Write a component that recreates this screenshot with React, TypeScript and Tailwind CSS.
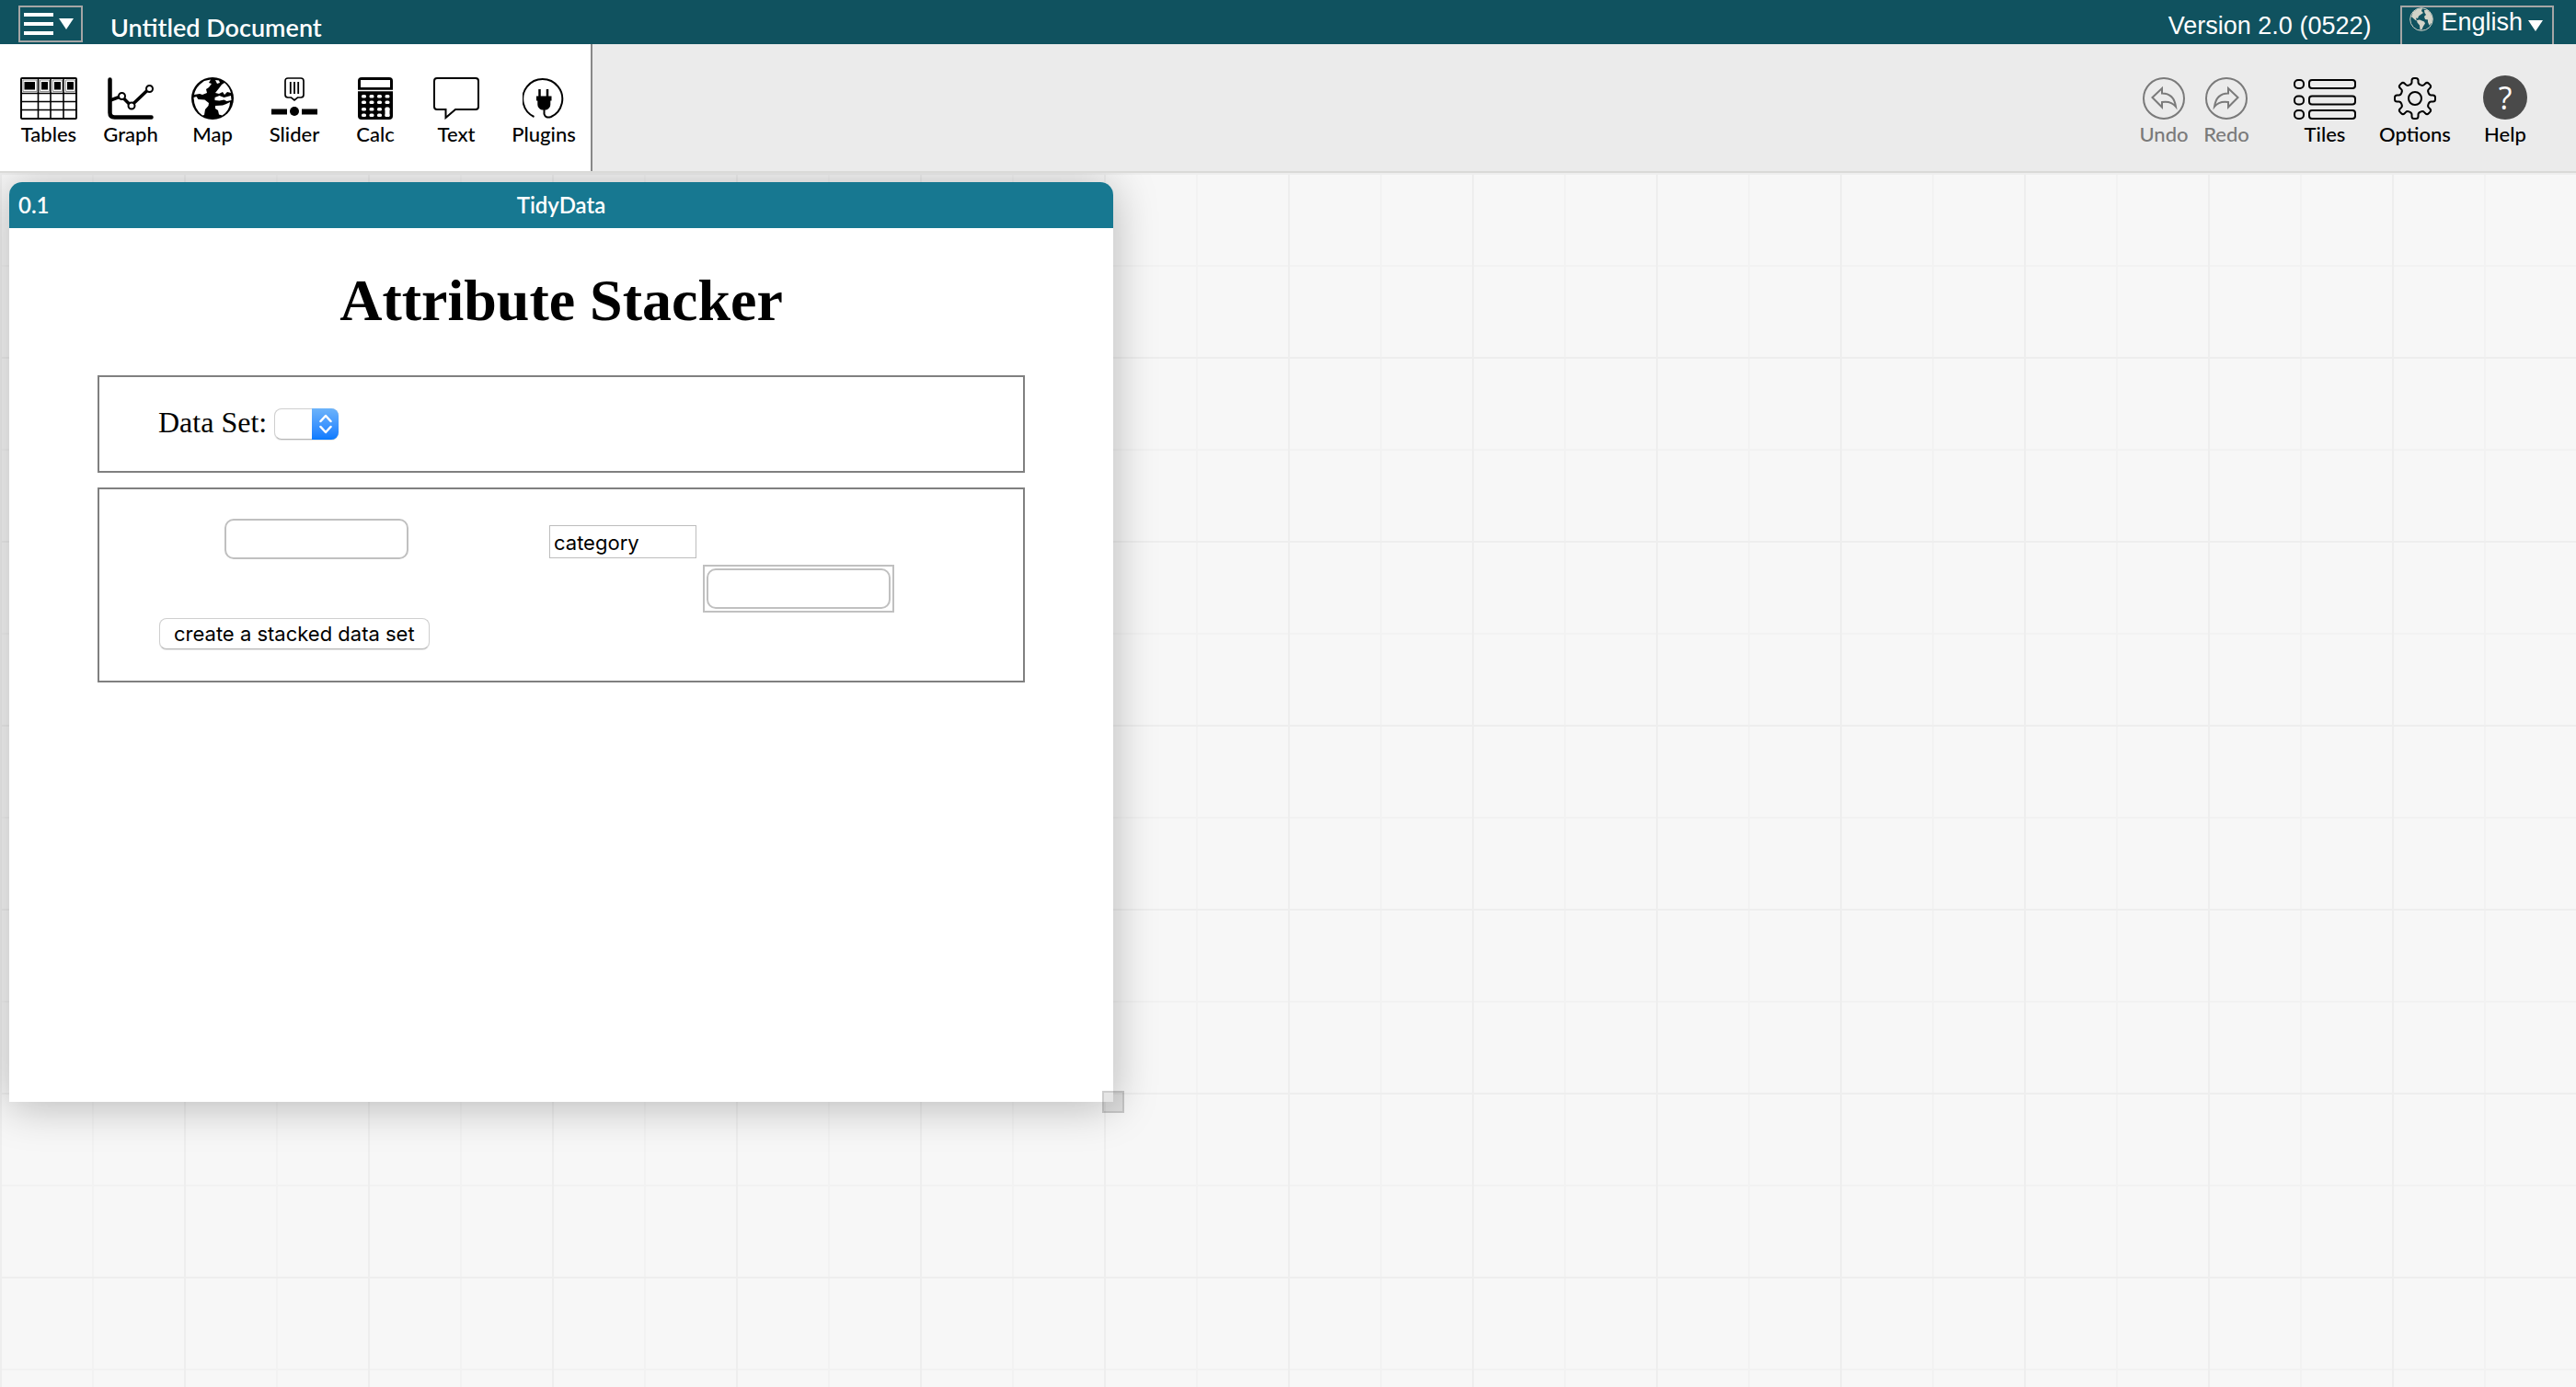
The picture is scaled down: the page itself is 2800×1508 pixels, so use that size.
import React from "react";

type IconProps = { className?: string };

const TablesIcon = () => (
  <svg width="62" height="46" viewBox="0 0 62 46">
    <rect x="1" y="1" width="60" height="44" rx="1" fill="#fff" stroke="#000" strokeWidth="2" />
    <path d="M1 17.500h60M1 26.500h60M1 35.500h60M19.500 1v44M33 1v44M47 1v44" stroke="#000" strokeWidth="1.600" fill="none" />
    <path d="M4.500 5h11.500v8.500h-11.500zM23 5h7v8.500h-7zM37 5h7v8.500h-7zM51 5h7v8.500h-7z" fill="#000" />
    <path d="M3 3h15v12.500h-15zM21.500 3h10v12.500h-10zM35.500 3h10v12.500h-10zM49.500 3h10v12.500h-10z" fill="none" stroke="#777" strokeWidth="0.800" />
  </svg>
);

const GraphIcon = () => (
  <svg width="50" height="46" viewBox="0 0 50 46" fill="none" stroke="#000">
    <path d="M2.500 2.500v36q0 5 5 5H47.500" strokeWidth="4.500" strokeLinecap="round" />
    <path d="M3 25l12-4.500L25.500 31 45 12.500" strokeWidth="3.500" />
    <circle cx="15.500" cy="20.500" r="3.500" fill="#fff" strokeWidth="2" />
    <circle cx="26" cy="31" r="3.500" fill="#fff" strokeWidth="2" />
    <circle cx="45.500" cy="12.500" r="3.500" fill="#fff" strokeWidth="2" />
  </svg>
);

const MapIcon = () => (
  <svg width="46" height="46" viewBox="0 0 46 46">
    <circle cx="23" cy="23" r="23" fill="#000" />
    <g fill="#fff">
      <path d="M9 8l5-4 7-1.500-2 3.500 3 1-3 4-3 2 1 4-5 2-3-1-6 1q1-6 6-11z" />
      <path d="M2.500 22l3-1 2 3 7 .5 4.500 3.500-.5 3-3.500 4-1 6-2 .5Q3 35 2.500 22z" />
      <path d="M26 3l4 .5 1 2.500-3 1zM30 12l3-4 3-2q5 4 7 11l-4-1-3 3-2-3-4 2-4-1z" />
      <path d="M25.500 22l5-2 5 2 7.500-2 .5 5-5 1-3-1.500-5 1-5-.5z" />
      <path d="M26 31l8-.5 4-1.500 4-2q0 9-8.500 14.500l-3.500-1-1-4.500-3-2z" />
    </g>
  </svg>
);

const SliderIcon = () => (
  <svg width="50" height="46" viewBox="0 0 50 46">
    <path d="M18 1h14q3 0 3 3v15q0 3-3 3h-3.500L25 25l-3.500-3H18q-3 0-3-3V4q0-3 3-3z" fill="#fff" stroke="#000" strokeWidth="1.700" />
    <path d="M20.800 5v13M25 5v13M29.200 5v13" stroke="#000" strokeWidth="1.800" />
    <path d="M0 34.500h17v6H0zM33 34.500h17v6H33z" />
    <circle cx="25" cy="37" r="5" />
  </svg>
);

const CalcIcon = () => (
  <svg width="38" height="46" viewBox="0 0 38 46">
    <rect width="38" height="46" rx="4" />
    <rect x="3" y="3" width="32" height="8" fill="#fff" />
    <path d="M0 14.500h38" stroke="#fff" strokeWidth="1.500" />
    {[20.5, 27, 34.5, 41].map((y) =>
      [6.5, 15, 23.5, 32].map((x) => (
        <rect key={`${x}-${y}`} x={x - 2.5} y={y - 1.5} width="5" height="3.500" rx="1.500" fill="#fff" />
      )),
    )}
    <rect x="29.500" y="32.500" width="5" height="10.500" rx="1.500" fill="#fff" />
  </svg>
);

const TextIcon = () => (
  <svg width="50" height="46" viewBox="0 0 50 46">
    <path d="M4 1h42q3 0 3 3v28q0 3-3 3H24L13.500 44V35H4q-3 0-3-3V4q0-3 3-3z" fill="#fff" stroke="#000" strokeWidth="2" />
  </svg>
);

const PluginsIcon = () => (
  <svg width="46" height="46" viewBox="0 0 46 46">
    <path d="M12.500 43A21.500 21.500 0 1 1 31 43q-6 2-7.500-3V33" fill="none" stroke="#000" strokeWidth="2" />
    <path d="M18.500 13v9M27 13v9" stroke="#000" strokeWidth="2.500" />
    <path d="M15 20.500h16.500v5h-1.200v4q0 4-4.500 6h-5q-4.500-2-4.500-6v-4H15z" />
  </svg>
);

const ArrowIcon = ({ className }: IconProps) => (
  <svg width="46" height="46" viewBox="0 0 46 46" fill="none" stroke="#7a7a7a" strokeWidth="2" className={className}>
    <circle cx="23" cy="23" r="22" />
    <path d="M10.500 22L21 12v5.500q13 0 15 14.500-5-6.500-15-5v5.500z" />
  </svg>
);

const TilesIcon = () => (
  <svg width="68" height="46" viewBox="0 0 68 46" fill="none" stroke="#000" strokeWidth="2">
    {[3, 20.5, 36].map((y) => (
      <g key={y}>
        <rect x="1" y={y} width="10" height="9" rx="4" />
        <rect x="17" y={y} width="50" height="9" rx="3" />
      </g>
    ))}
  </svg>
);

const OptionsIcon = () => (
  <svg width="46" height="46" viewBox="0 0 46 46" fill="none" stroke="#000" strokeWidth="2" strokeLinejoin="round">
    <circle cx="23" cy="23" r="7" />
    {Array.from({ length: 8 }, (_, i) => (
      <path
        key={i}
        transform={`rotate(${i * 45} 23 23)`}
        d="M16.900 8.300Q19.500 7.500 19.500 5.500V3.500Q19.500 1 22 1h2q2.500 0 2.500 2.500v2q0 2 2.600 2.800"
      />
    ))}
  </svg>
);

const HelpIcon = () => (
  <span className="flex h-12 w-12 items-center justify-center rounded-full bg-[#4a4a4a] font-['Open_Sans',sans-serif] text-[34px] leading-none text-white">
    ?
  </span>
);

const GlobeIcon = () => (
  <svg width="26" height="26" viewBox="0 0 26 26">
    <circle cx="13" cy="13" r="12.300" fill="none" stroke="#d3d3c8" />
    <g fill="#d3d3c8">
      <path d="M2 10l2-5 5-3.500 5-.5-1 3 2 2-3 2-2 1.500-1 2.500-2-.5.500 2 2 1.500-3-1z" />
      <path d="M8 14l3-.5 5 2 1 2-2 3-1.500 3.500-2 .5-.5-5-2.500-3z" />
      <path d="M16 3l3-.5 4 4 2 5-.5 5-3 3-1.500-3.500v-2.500l-3-.5-1-3 2-2-1.500-2z" />
    </g>
  </svg>
);

const Caret = () => (
  <svg width="16" height="12" viewBox="0 0 16 12" fill="#fff">
    <path d="M0 0h16L8 12z" />
  </svg>
);

const ToolButton = ({
  label,
  icon,
  width,
  className = "",
}: {
  label: string;
  icon: React.ReactNode;
  width: string;
  className?: string;
}) => (
  <button type="button" className={`flex shrink-0 flex-col items-center justify-end ${width} ${className}`}>
    {icon}
    <span className="mt-0.5 text-[22px] leading-7 font-medium">{label}</span>
  </button>
);

export default function App() {
  return (
    <div className="flex min-h-screen flex-col overflow-hidden bg-[#f7f7f7] font-[Lato,sans-serif] text-black">
      <header className="flex h-12 items-center bg-[#10525f] pr-6 pl-5 text-white">
        <button type="button" aria-label="Menu" className="mt-1 flex h-10 w-[70px] items-center gap-1.5 border-2 border-[#a5a5a5] px-1">
          <svg width="32" height="24" viewBox="0 0 32 24" stroke="#fff" strokeWidth="4">
            <path d="M0 2h32M0 12h32M0 22h32" />
          </svg>
          <Caret />
        </button>
        <h1 className="mt-3 ml-[30px] text-[27px] leading-8 font-semibold">Untitled Document</h1>
        <span className="mt-2 ml-auto font-['Liberation_Sans',sans-serif] text-[27px] leading-8">Version 2.0 (0522)</span>
        <button
          type="button"
          className="ml-8 flex h-[42px] items-start self-end border-2 border-b-0 border-[#a5a5a5] pr-2.5 pl-2 font-['Liberation_Sans',sans-serif] text-[27px] leading-8"
        >
          <GlobeIcon />
          <span className="ml-2">English</span>
          <span className="mt-3.5 ml-1.5 flex">
            <Caret />
          </span>
        </button>
      </header>

      <nav className="flex h-[140px] border-b-2 border-[#dadad8] bg-[#ebebeb]">
        <div className="flex border-r-2 border-[#888] bg-white pb-[26px] pl-2">
          <ToolButton width="w-[90px]" label="Tables" icon={<TablesIcon />} />
          <ToolButton width="w-[88px]" label="Graph" icon={<GraphIcon />} />
          <ToolButton width="w-[90px]" label="Map" icon={<MapIcon />} />
          <ToolButton width="w-[88px]" label="Slider" icon={<SliderIcon />} />
          <ToolButton width="w-[88px]" label="Calc" icon={<CalcIcon />} />
          <ToolButton width="w-[88px]" label="Text" icon={<TextIcon />} />
          <ToolButton width="w-[102px]" label="Plugins" icon={<PluginsIcon />} />
        </div>
        <div className="ml-auto flex pr-7 pb-[26px]">
          <ToolButton width="w-[68px]" label="Undo" icon={<ArrowIcon />} className="text-[#7a7a7a]" />
          <ToolButton width="w-[68px]" label="Redo" icon={<ArrowIcon className="-scale-x-100" />} className="text-[#7a7a7a]" />
          <ToolButton width="w-[98px]" label="Tiles" icon={<TilesIcon />} className="ml-6" />
          <ToolButton width="w-[98px]" label="Options" icon={<OptionsIcon />} />
          <ToolButton width="w-[98px]" label="Help" icon={<HelpIcon />} />
        </div>
      </nav>

      <main className="relative grow overflow-hidden bg-[linear-gradient(90deg,#eeeeee_2px,transparent_2px),linear-gradient(#eeeeee_2px,transparent_2px),linear-gradient(90deg,#f2f2f2_2px,transparent_2px),linear-gradient(#f2f2f2_2px,transparent_2px)] bg-[size:200px_200px,200px_200px,100px_100px,100px_100px]">
        <section className="absolute top-2.5 left-2.5 flex h-[1000px] w-[1200px] flex-col rounded-t-[14px] bg-white shadow-[0_4px_48px_rgba(0,0,0,0.27)]">
          <div className="grid h-[50px] shrink-0 grid-cols-[1fr_auto_1fr] items-center rounded-t-[14px] bg-[#177891] px-2.5 text-[24px] leading-8 font-semibold text-white">
            <span>0.1</span>
            <h2>TidyData</h2>
          </div>

          <form className="flex grow flex-col px-24 font-['Liberation_Serif',serif]" onSubmit={(e) => e.preventDefault()}>
            <h1 className="mt-[42px] text-center text-[64px] leading-[74px] font-bold">Attribute Stacker</h1>

            <div className="mt-11 flex h-[106px] items-center border-2 border-[#808080] pb-1 pl-16 text-[32px] leading-9">
              <label htmlFor="dataset">Data Set:</label>
              <div className="relative mt-1 ml-2 flex">
                <select
                  id="dataset"
                  className="h-[34px] w-[70px] appearance-none rounded-[8px] border border-[#cfcfcf] border-b-[#b5b5b5] bg-white shadow-[0_1px_1px_rgba(0,0,0,0.1)]"
                />
                <span className="pointer-events-none absolute inset-y-0 right-0 flex w-[29px] items-center justify-center rounded-r-[8px] bg-linear-to-b from-[#6cb3fa] to-[#067aff]">
                  <svg width="14" height="22" viewBox="0 0 14 22" fill="none" stroke="#fff" strokeWidth="2.500" strokeLinecap="round" strokeLinejoin="round">
                    <path d="M1.500 8L7 2l5.500 6M1.500 14L7 20l5.500-6" />
                  </svg>
                </span>
              </div>
            </div>

            <div className="mt-4 h-[212px] border-2 border-[#808080] pt-8 pl-16">
              <div className="flex items-start pl-[72px]">
                <input aria-label="Attribute" className="h-11 w-[200px] rounded-[10px] border-2 border-[#c0c0c0] bg-white px-2" />
                <input
                  aria-label="Category name"
                  defaultValue="category"
                  className="mt-[7px] ml-[153px] h-9 w-40 border border-[#bdbdbd] bg-white pt-0.5 pl-1 font-[Inter,sans-serif] text-[22px] leading-7"
                />
                <div className="mt-[50px] ml-[7px] border-2 border-[#c0c0c0] p-0.5">
                  <input aria-label="Value" className="block h-11 w-[200px] rounded-[10px] border-2 border-[#c0c0c0] bg-white px-2" />
                </div>
              </div>
              <button
                type="submit"
                className="mt-1.5 ml-px h-[34px] rounded-[8px] border border-[#cfcfcf] border-b-[#b5b5b5] bg-white px-[15px] font-[Inter,sans-serif] text-[22px] leading-7 shadow-[0_1px_1px_rgba(0,0,0,0.1)]"
              >
                create a stacked data set
              </button>
            </div>
          </form>

          <span className="absolute -right-3 -bottom-3 h-6 w-6 border-2 border-black/10 bg-black/10" />
        </section>
      </main>
    </div>
  );
}
